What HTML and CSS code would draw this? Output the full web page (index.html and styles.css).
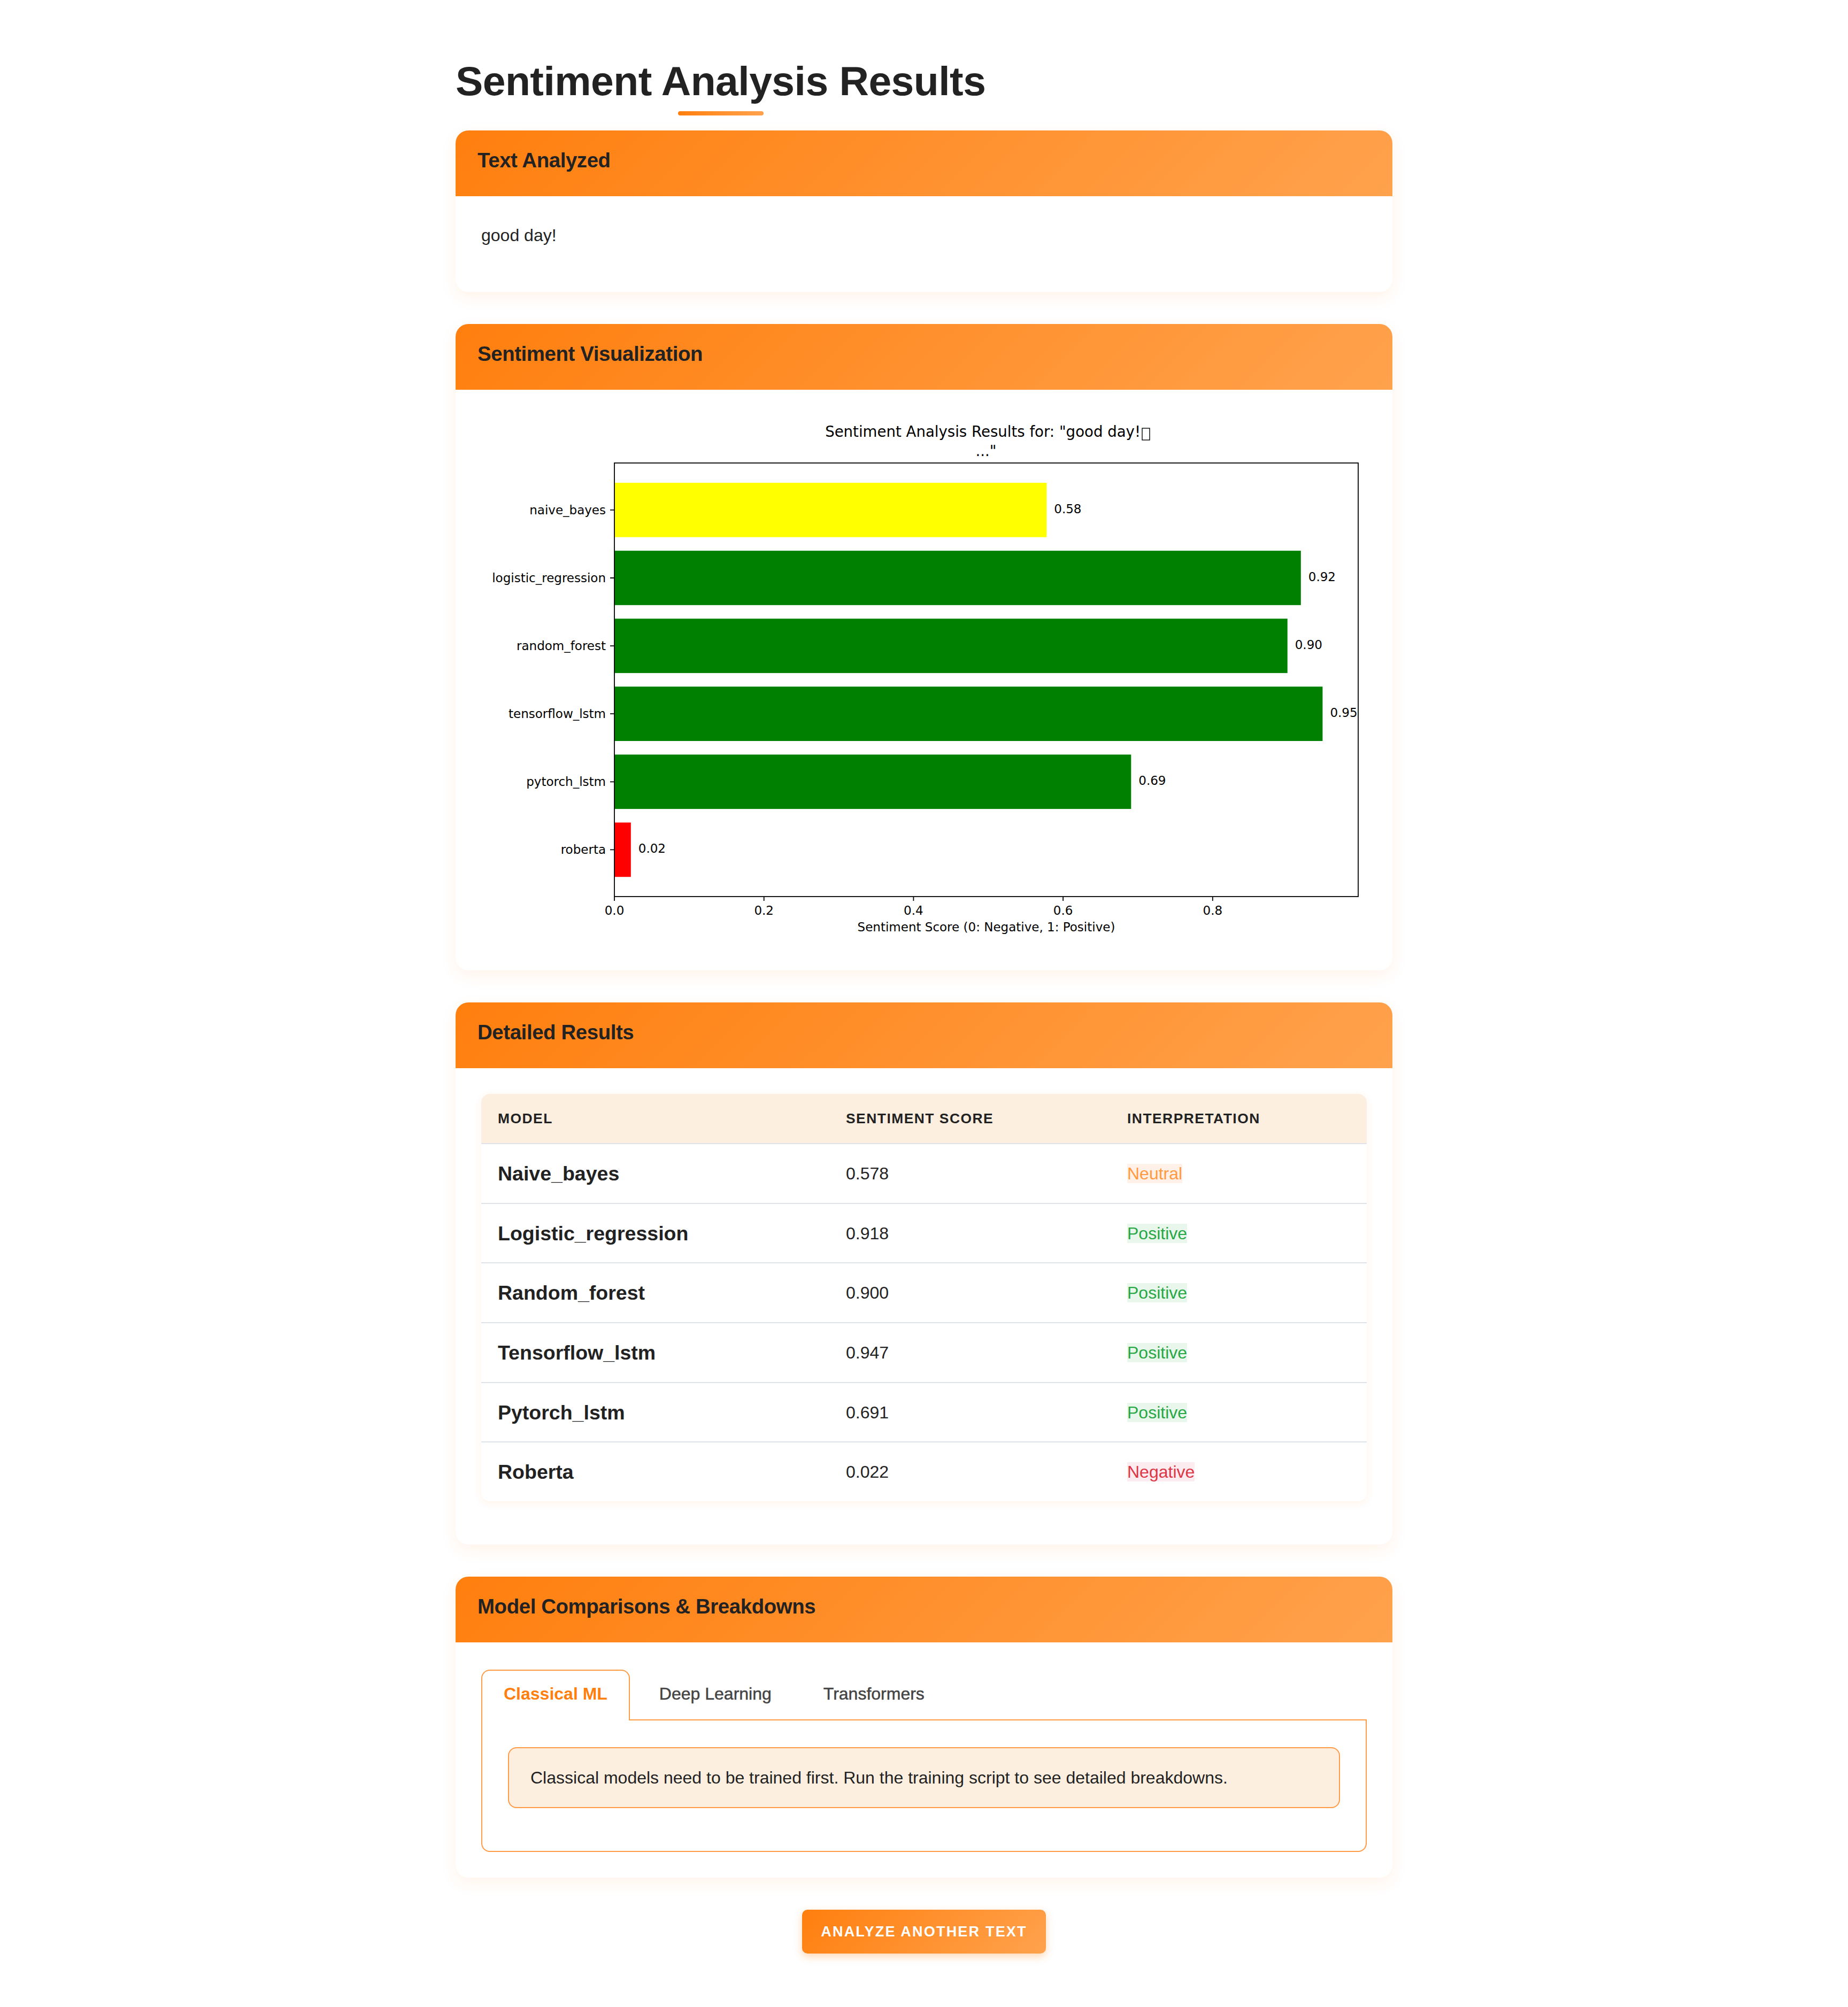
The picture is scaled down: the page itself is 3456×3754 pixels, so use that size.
FILE: index.html
```html
<!DOCTYPE html>
<html lang="en">
<head>
<meta charset="utf-8">
<title>Sentiment Analysis Results</title>
<link rel="stylesheet" href="styles.css">
</head>
<body>
<div class="page">
  <header class="page-head">
    <h1 class="title">Sentiment Analysis Results</h1>
  </header>

  <section class="card">
    <div class="card-head"><h2>Text Analyzed</h2></div>
    <div class="card-body">
      <p class="analyzed">good day!</p>
    </div>
  </section>

  <section class="card">
    <div class="card-head"><h2>Sentiment Visualization</h2></div>
    <div class="card-body">
      <svg class="chart" viewBox="0 0 1656 990" width="1656" height="990">
        <g font-family="DejaVu Sans, sans-serif" fill="#000">
          <text x="1233" y="40" font-size="27.6" text-anchor="end">Sentiment Analysis Results for: &quot;good day!</text>
          <rect x="1236" y="24" width="14" height="22" fill="none" stroke="#000" stroke-width="1.4"/>
          <text x="944" y="76" font-size="27.6" text-anchor="middle">...&quot;</text>

          <rect x="249" y="126" width="808.3" height="101.7" fill="#ffff00"/>
          <rect x="249" y="253.1" width="1283.8" height="101.7" fill="#008000"/>
          <rect x="249" y="380.2" width="1258.7" height="101.7" fill="#008000"/>
          <rect x="249" y="507.3" width="1324.4" height="101.7" fill="#008000"/>
          <rect x="249" y="634.4" width="966.3" height="101.7" fill="#008000"/>
          <rect x="249" y="761.5" width="30.8" height="101.7" fill="#ff0000"/>

          <g font-size="23">
            <text x="1071.3" y="182.9">0.58</text>
            <text x="1546.8" y="310">0.92</text>
            <text x="1521.7" y="437.1">0.90</text>
            <text x="1587.4" y="564.2">0.95</text>
            <text x="1229.3" y="691.3">0.69</text>
            <text x="293.8" y="818.4">0.02</text>
          </g>

          <g font-size="23" text-anchor="end">
            <text x="233" y="184.9">naive_bayes</text>
            <text x="233" y="312">logistic_regression</text>
            <text x="233" y="439.1">random_forest</text>
            <text x="233" y="566.2">tensorflow_lstm</text>
            <text x="233" y="693.3">pytorch_lstm</text>
            <text x="233" y="820.4">roberta</text>
          </g>

          <path d="M241 176.9H249M241 304H249M241 431.1H249M241 558.2H249M241 685.3H249M241 812.4H249M249 900V908M528.7 900V908M808.4 900V908M1088.1 900V908M1367.8 900V908" stroke="#000" stroke-width="1.8" fill="none"/>

          <g font-size="23" text-anchor="middle">
            <text x="249" y="934">0.0</text>
            <text x="528.7" y="934">0.2</text>
            <text x="808.4" y="934">0.4</text>
            <text x="1088.1" y="934">0.6</text>
            <text x="1367.8" y="934">0.8</text>
            <text x="944.5" y="965">Sentiment Score (0: Negative, 1: Positive)</text>
          </g>

          <rect x="249" y="89" width="1391" height="811" fill="none" stroke="#000" stroke-width="1.8"/>
        </g>
      </svg>
    </div>
  </section>

  <section class="card">
    <div class="card-head"><h2>Detailed Results</h2></div>
    <div class="card-body">
      <div class="table-wrap">
        <table class="results">
          <colgroup>
            <col class="col-model">
            <col class="col-score">
            <col class="col-interp">
          </colgroup>
          <thead>
            <tr><th>Model</th><th>Sentiment Score</th><th>Interpretation</th></tr>
          </thead>
          <tbody>
            <tr><td class="model">Naive_bayes</td><td>0.578</td><td><span class="badge neutral">Neutral</span></td></tr>
            <tr><td class="model">Logistic_regression</td><td>0.918</td><td><span class="badge positive">Positive</span></td></tr>
            <tr><td class="model">Random_forest</td><td>0.900</td><td><span class="badge positive">Positive</span></td></tr>
            <tr><td class="model">Tensorflow_lstm</td><td>0.947</td><td><span class="badge positive">Positive</span></td></tr>
            <tr><td class="model">Pytorch_lstm</td><td>0.691</td><td><span class="badge positive">Positive</span></td></tr>
            <tr><td class="model">Roberta</td><td>0.022</td><td><span class="badge negative">Negative</span></td></tr>
          </tbody>
        </table>
      </div>
    </div>
  </section>

  <section class="card">
    <div class="card-head"><h2>Model Comparisons &amp; Breakdowns</h2></div>
    <div class="card-body">
      <div class="tabs">
        <button class="tab active">Classical ML</button>
        <button class="tab">Deep Learning</button>
        <button class="tab">Transformers</button>
      </div>
      <div class="tab-panel">
        <div class="notice">Classical models need to be trained first. Run the training script to see detailed breakdowns.</div>
      </div>
    </div>
  </section>

  <div class="actions">
    <button class="btn">Analyze Another Text</button>
  </div>
</div>
</body>
</html>
```

FILE: styles.css
```css
* { box-sizing: border-box; }

html, body {
  margin: 0;
  padding: 0;
  background: #ffffff;
}

body {
  font-family: "Liberation Sans", Arial, Helvetica, sans-serif;
  color: #222222;
}

.page {
  width: 1752px;
  margin: 0 auto;
  padding: 105px 0 100px;
}

.page-head {
  margin-bottom: 28px;
}

.title {
  display: inline-block;
  position: relative;
  margin: 0;
  padding-bottom: 19px;
  font-size: 76.8px;
  line-height: 92px;
  font-weight: 700;
  letter-spacing: -0.5px;
  color: #222222;
}

.title::after {
  content: "";
  position: absolute;
  left: 50%;
  bottom: 0;
  width: 160px;
  height: 8px;
  margin-left: -80px;
  border-radius: 4px;
  background: linear-gradient(90deg, #ff7f0e, #ffa24d);
}

.card {
  background: #ffffff;
  border-radius: 24px;
  overflow: hidden;
  box-shadow: 0 10px 30px rgba(255, 127, 14, 0.09);
  margin-bottom: 60px;
}

.card-head {
  background: linear-gradient(135deg, #ff7f0e 0%, #ffa24d 100%);
  padding: 33px 41px 44px;
}

.card-head h2 {
  margin: 0;
  font-size: 38.4px;
  line-height: 46px;
  font-weight: 700;
  letter-spacing: -0.4px;
  color: #222222;
}

.card-body {
  padding: 48px;
}

.analyzed {
  margin: 0 0 32px;
  font-size: 32px;
  line-height: 51px;
}

.chart {
  display: block;
  width: 1656px;
  height: 990px;
}

.table-wrap {
  border-radius: 16px;
  overflow: hidden;
  box-shadow: 0 4px 16px rgba(255, 127, 14, 0.09);
  margin-bottom: 33px;
}

.results {
  width: 100%;
  border-collapse: collapse;
  table-layout: fixed;
}

.col-model { width: 651px; }
.col-score { width: 526px; }
.col-interp { width: 479px; }

.results th {
  background: #fdefe0;
  text-align: left;
  font-size: 26.4px;
  line-height: 31px;
  font-weight: 700;
  letter-spacing: 1.5px;
  text-transform: uppercase;
  padding: 31px 31px 30px;
  border-bottom: 2px solid #dfe3e8;
  color: #222222;
}

.results td {
  padding: 30.85px 31px;
  border-bottom: 2px solid #dfe3e8;
  font-size: 32px;
  line-height: 48px;
  color: #222222;
  vertical-align: middle;
}

.results tbody tr:last-child td {
  border-bottom: 0;
}

.results td.model {
  font-weight: 700;
  font-size: 37.5px;
}

.badge {
  padding: 0;
}

.badge.neutral {
  color: #ff9a40;
  background: #fff0e8;
}

.badge.positive {
  color: #28a745;
  background: #e9f6ec;
}

.badge.negative {
  color: #dc3545;
  background: #fdecef;
}

.tabs {
  display: flex;
  gap: 13px;
  padding-top: 3px;
  border-bottom: 2px solid #ff9a45;
}

.tab {
  font-family: "Liberation Sans", Arial, Helvetica, sans-serif;
  font-size: 32px;
  line-height: 37px;
  padding: 25px 40px 31px;
  margin: 0 0 -2px;
  border: 2px solid transparent;
  border-bottom: 0;
  border-radius: 16px 16px 0 0;
  background: transparent;
  color: #444444;
  -webkit-text-stroke: 0.5px #444444;
  cursor: pointer;
}

.tab.active {
  border-color: #ff9a45;
  background: #ffffff;
  color: #ff7f0e;
  font-weight: 700;
  -webkit-text-stroke: 0;
}

.tab-panel {
  border: 2px solid #ff9a45;
  border-top: 0;
  border-radius: 0 0 16px 16px;
  padding: 50px 48px 48px;
}

.notice {
  background: #fdefe0;
  border: 2px solid #ff9a45;
  border-radius: 16px;
  padding: 36px 40px;
  font-size: 32px;
  line-height: 38px;
  margin-bottom: 32px;
  color: #222222;
}

.actions {
  display: flex;
  justify-content: center;
}

.btn {
  font-family: "Liberation Sans", Arial, Helvetica, sans-serif;
  background: linear-gradient(135deg, #ff7f0e, #ffa24d);
  color: #ffffff;
  font-weight: 700;
  font-size: 27px;
  line-height: 32px;
  letter-spacing: 2.2px;
  text-transform: uppercase;
  padding: 25px 35px;
  border: 0;
  border-radius: 10px;
  box-shadow: 0 6px 16px rgba(255, 127, 14, 0.3);
  cursor: pointer;
}
```
